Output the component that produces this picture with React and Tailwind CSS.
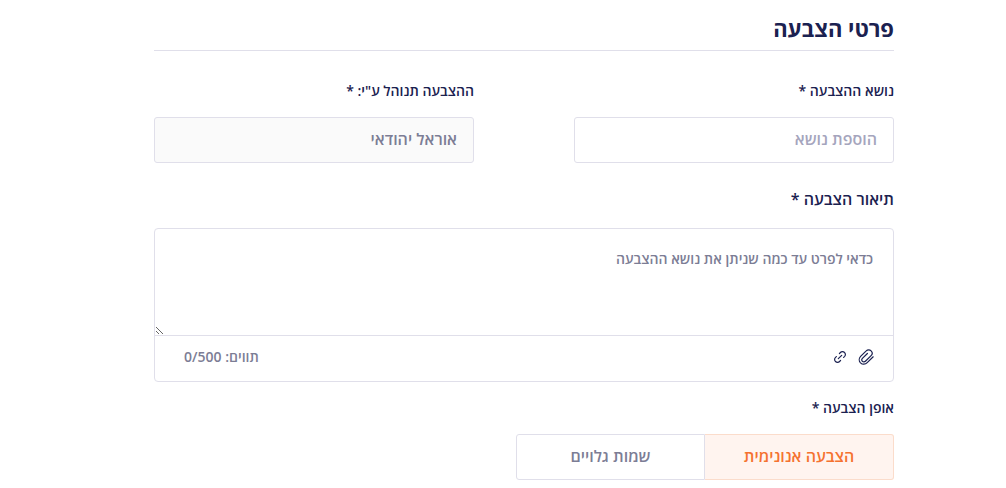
import { useState } from 'react'

const methods = [
  { id: 'anonymous', label: 'הצבעה אנונימית' },
  { id: 'open', label: 'שמות גלויים' },
]

const maxLength = 500

const ui = {
  label: 'block text-sm leading-5 font-semibold text-[#1b2150]',
  input:
    'mt-4 block h-[46px] w-full rounded-[3px] border border-[#e0dfea] px-4 pb-0.5 text-base font-semibold text-[#7c7d95] outline-none placeholder:text-[#a5a5bd]',
}

function PaperclipIcon() {
  return (
    <svg viewBox="0 0 16 16" className="size-4" fill="none" stroke="currentColor" strokeWidth="1.2" strokeLinecap="round" strokeLinejoin="round" aria-hidden="true">
      <path d="M15.2 7.8 9.2 13.6a4.6 4.6 0 0 1-6.7.2 4.6 4.6 0 0 1 .1-6.4l5.6-5.5a3.4 3.4 0 0 1 4.9 0 3.4 3.4 0 0 1 0 4.8l-5.7 5.6a2.1 2.1 0 0 1-3 0 2.1 2.1 0 0 1 0-2.9l5-4.9" />
    </svg>
  )
}

function LinkIcon() {
  return (
    <svg viewBox="0 0 12 12" className="size-3" fill="none" stroke="currentColor" strokeWidth="1.2" strokeLinecap="round" strokeLinejoin="round" aria-hidden="true">
      <path d="M4.3 7.7 7.7 4.3" />
      <path d="M5.4 2.6 6.4 1.5a2.8 2.8 0 0 1 4.1 0 2.8 2.8 0 0 1 0 4.1L9.6 6.4" />
      <path d="M6.6 9.4 5.6 10.5a2.8 2.8 0 0 1-4.1 0 2.8 2.8 0 0 1 0-4.1L2.4 5.6" />
    </svg>
  )
}

export default function App() {
  const [subject, setSubject] = useState('')
  const [description, setDescription] = useState('')
  const [method, setMethod] = useState('anonymous')

  return (
    <main dir="rtl" className="bg-white pt-[15px] pr-28 pb-2 pl-[154px] font-['Open_Sans','Noto_Sans',sans-serif]">
      <h1 className="border-b border-[#e0dfea] pb-[9px] text-[22px] leading-[26px] font-bold text-[#1b2150]">
        פרטי הצבעה
      </h1>

      <div className="mt-[30px] grid grid-cols-2 gap-[100px]">
        <div>
          <label htmlFor="subject" className={ui.label}>נושא ההצבעה *</label>
          <input
            id="subject"
            type="text"
            value={subject}
            onChange={(event) => setSubject(event.target.value)}
            placeholder="הוספת נושא"
            className={`${ui.input} bg-white`}
          />
        </div>
        <div>
          <label htmlFor="manager" className={ui.label}>ההצבעה תנוהל ע"י: *</label>
          <input id="manager" type="text" value="אוראל יהודאי" readOnly className={`${ui.input} bg-[#fafafa]`} />
        </div>
      </div>

      <label htmlFor="description" className="mt-6 block text-base leading-6 font-semibold text-[#1b2150]">
        תיאור הצבעה *
      </label>
      <div className="mt-[17px] rounded-[4px] border border-[#e0dfea]">
        <textarea
          id="description"
          value={description}
          onChange={(event) => setDescription(event.target.value)}
          maxLength={maxLength}
          placeholder="כדאי לפרט עד כמה שניתן את נושא ההצבעה"
          className="block h-[106px] w-full resize-y bg-transparent px-5 py-5 text-sm leading-5 font-semibold text-[#7c7d95] outline-none placeholder:text-[#7c7d95]"
        />
        <div className="flex h-[46px] items-center justify-between border-t border-[#e0dfea] pr-[19px] pb-[3px] pl-[29px]">
          <div className="flex items-center gap-3 text-[#1b2150]">
            <button type="button" aria-label="צירוף קובץ">
              <PaperclipIcon />
            </button>
            <button type="button" aria-label="הוספת קישור">
              <LinkIcon />
            </button>
          </div>
          <span className="text-sm leading-5 font-semibold text-[#7c7d95]">
            תווים: <bdi dir="ltr">{description.length}/{maxLength}</bdi>
          </span>
        </div>
      </div>

      <div role="group" aria-labelledby="method-label">
        <p id="method-label" className={`mt-4 ${ui.label}`}>אופן הצבעה *</p>
        <div className="mt-4 flex">
          {methods.map((item) => (
            <button
              key={item.id}
              type="button"
              aria-pressed={method === item.id}
              onClick={() => setMethod(item.id)}
              className={`h-[46px] w-[189px] border pb-0.5 text-base font-semibold first:rounded-r-[3px] first:border-l-0 last:rounded-l-[3px] ${
                method === item.id
                  ? 'border-[#fbdccb] bg-[#fff4ef] text-[#f5722f]'
                  : 'border-[#e0dfea] bg-white text-[#7c7d95]'
              }`}
            >
              {item.label}
            </button>
          ))}
        </div>
      </div>
    </main>
  )
}
